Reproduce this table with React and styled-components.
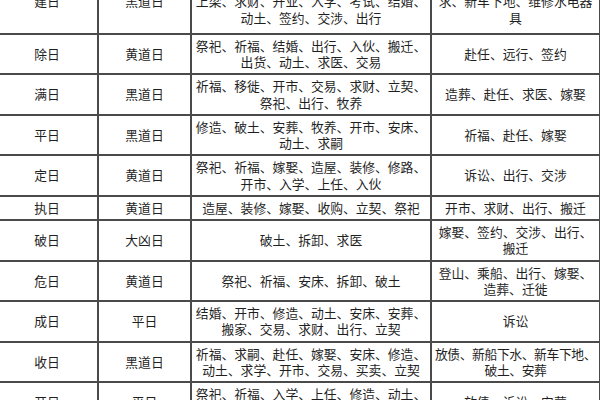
import React from "react";
import styled, { createGlobalStyle } from "styled-components";

const GlobalStyle = createGlobalStyle`
  html, body {
    margin: 0;
    padding: 0;
    background: #fff;
    overflow: hidden;
  }
  body {
    width: 600px;
    height: 400px;
  }
`;

const Page = styled.div`
  width: 600px;
  height: 400px;
  overflow: hidden;
`;

const Table = styled.table`
  width: 604px;
  margin: -28px 0 0 -5px;
  border-collapse: collapse;
  table-layout: fixed;
  font-family: "Noto Sans CJK SC", "Noto Sans CJK TC", sans-serif;
  font-size: 12.8px;
  line-height: 16.25px;
  color: #1f1f1f;
`;

const Col = styled.col`
  width: ${(p) => p.$w}px;
`;

const Cell = styled.td`
  border: 2px solid #4a4a4a;
  padding: 3px 1px ${(p) => (p.$lead ? 7 : 3)}px;
  text-align: center;
  vertical-align: middle;
  white-space: nowrap;
  overflow: hidden;
  letter-spacing: ${(p) => (p.$tight ? "-0.4px" : "0")};
`;

const rows = [
  {
    name: "建日",
    kind: "黑道日",
    good: ["祭祀、祈福、求嗣、开光、出行、解除、", "上梁、求财、开业、入学、考试、结婚、", "动土、签约、交涉、出行"],
    bad: ["出行、上任、会友、上书、寻", "求、新车下地、维修水电器", "具"],
  },
  {
    name: "除日",
    kind: "黄道日",
    good: ["祭祀、祈福、结婚、出行、入伙、搬迁、", "出货、动土、求医、交易"],
    bad: ["赴任、远行、签约"],
  },
  {
    name: "满日",
    kind: "黑道日",
    good: ["祈福、移徙、开市、交易、求财、立契、", "祭祀、出行、牧养"],
    bad: ["造葬、赴任、求医、嫁娶"],
  },
  {
    name: "平日",
    kind: "黑道日",
    good: ["修造、破土、安葬、牧养、开市、安床、", "动土、求嗣"],
    bad: ["祈福、赴任、嫁娶"],
  },
  {
    name: "定日",
    kind: "黄道日",
    good: ["祭祀、祈福、嫁娶、造屋、装修、修路、", "开市、入学、上任、入伙"],
    bad: ["诉讼、出行、交涉"],
  },
  {
    name: "执日",
    kind: "黄道日",
    good: ["造屋、装修、嫁娶、收购、立契、祭祀"],
    bad: ["开市、求财、出行、搬迁"],
  },
  {
    name: "破日",
    kind: "大凶日",
    good: ["破土、拆卸、求医"],
    bad: ["嫁娶、签约、交涉、出行、", "搬迁"],
  },
  {
    name: "危日",
    kind: "黄道日",
    good: ["祭祀、祈福、安床、拆卸、破土"],
    bad: ["登山、乘船、出行、嫁娶、", "造葬、迁徙"],
  },
  {
    name: "成日",
    kind: "平日",
    good: ["结婚、开市、修造、动土、安床、安葬、", "搬家、交易、求财、出行、立契"],
    bad: ["诉讼"],
  },
  {
    name: "收日",
    kind: "黑道日",
    good: ["祈福、求嗣、赴任、嫁娶、安床、修造、", "动土、求学、开市、交易、买卖、立契"],
    bad: ["放债、新船下水、新车下地、", "破土、安葬"],
    tight: true,
  },
  {
    name: "开日",
    kind: "平日",
    good: ["祭祀、祈福、入学、上任、修造、动土、", "开市、安床、交易、出行、竖柱"],
    bad: ["放债、诉讼、安葬"],
  },
];

const Lines = ({ lines }) =>
  lines.map((line, i) => (
    <React.Fragment key={i}>
      {i > 0 && <br />}
      {line}
    </React.Fragment>
  ));

export default function App() {
  return (
    <Page>
      <GlobalStyle />
      <Table>
        <colgroup>
          <Col $w={102} />
          <Col $w={93} />
          <Col $w={240} />
          <Col $w={169} />
        </colgroup>
        <tbody>
          {rows.map((row, i) => (
            <tr key={row.name}>
              <Cell $lead={i === 0}>{row.name}</Cell>
              <Cell $lead={i === 0}>{row.kind}</Cell>
              <Cell $lead={i === 0}>
                <Lines lines={row.good} />
              </Cell>
              <Cell $lead={i === 0} $tight={row.tight}>
                <Lines lines={row.bad} />
              </Cell>
            </tr>
          ))}
        </tbody>
      </Table>
    </Page>
  );
}
